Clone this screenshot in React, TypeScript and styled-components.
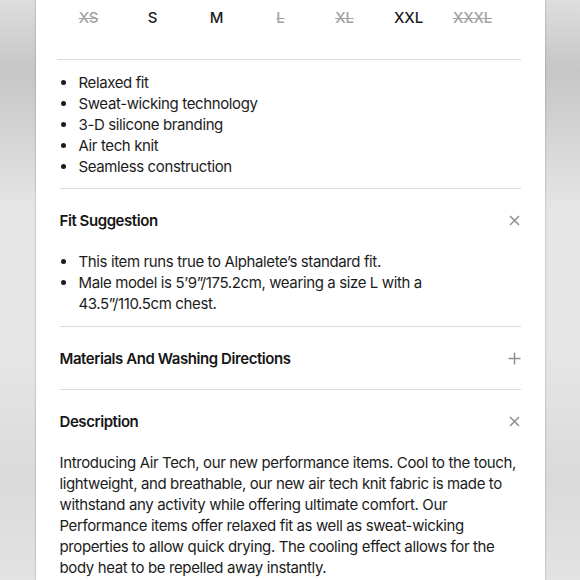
import React from "react";
import styled, { createGlobalStyle } from "styled-components";

const Global = createGlobalStyle`
  html, body { margin: 0; padding: 0; }
  body {
    width: 580px;
    height: 580px;
    overflow: hidden;
    font-family: Inter, "Noto Sans", sans-serif;
    background: linear-gradient(180deg, #dedede 0px, #c6c6c6 70px, #d3d3d3 130px, #e6e6e6 210px, #e6e6e6 350px, #dadada 480px, #e3e3e3 580px);
    -webkit-font-smoothing: antialiased;
  }
`;

const Panel = styled.main`
  width: 509px;
  margin: 0 auto;
  min-height: 640px;
  background: #fff;
  box-shadow: 0 0 0 1px rgba(0, 0, 0, 0.06), 0 0 3px rgba(0, 0, 0, 0.12);
  padding: 0 24px;
  box-sizing: border-box;
  color: #1c1c1c;
  letter-spacing: -0.38px;
`;

const SizeRow = styled.div`
  display: grid;
  grid-template-columns: repeat(7, 64px);
  margin-left: -3px;
  padding: 7px 0 31px;
  border-bottom: 1px solid #dcdcdc;
`;

const Size = styled.span<{ $out?: boolean }>`
  text-align: center;
  font-size: 15px;
  line-height: 21px;
  font-weight: 500;
  letter-spacing: -0.2px;
  color: ${(p) => (p.$out ? "#a3a3a3" : "#1c1c1c")};
  text-decoration: ${(p) => (p.$out ? "line-through" : "none")};
  text-decoration-thickness: 1px;
`;

const List = styled.ul<{ $top?: number; $bottom?: number }>`
  list-style: none;
  margin: 0;
  padding: ${(p) => p.$top ?? 0}px 0 ${(p) => p.$bottom ?? 12}px;
`;

const Item = styled.li`
  display: grid;
  grid-template-columns: 19px 1fr;
  font-size: 15px;
  line-height: 21px;
  &::before {
    content: "";
    width: 5px;
    height: 5px;
    border-radius: 50%;
    background: #1c1c1c;
    margin: 8px 0 0 1px;
  }
`;

const Section = styled.section`
  border-top: 1px solid #dcdcdc;
`;

const Header = styled.div`
  display: flex;
  align-items: center;
  justify-content: space-between;
  padding: 21px 0 20px;
`;

const Title = styled.h3`
  margin: 0;
  font-size: 15px;
  line-height: 21px;
  font-weight: 600;
  letter-spacing: -0.43px;
  color: #161616;
`;

const IconBox = styled.span`
  display: flex;
  width: 14px;
  height: 14px;
  align-items: center;
  justify-content: center;
  margin-right: -1px;
`;

const Paragraph = styled.p`
  margin: 0;
  padding: 0 0 12px;
  font-size: 15px;
  line-height: 21px;
`;

const Close = () => (
  <IconBox>
    <svg width="11" height="11" viewBox="0 0 11 11">
      <path d="M1 1L10 10M10 1L1 10" stroke="#8f8f8f" strokeWidth="1.5" />
    </svg>
  </IconBox>
);

const Plus = () => (
  <IconBox>
    <svg width="13" height="13" viewBox="0 0 13 13">
      <path d="M6.5 0.5V12.5M0.5 6.5H12.5" stroke="#8f8f8f" strokeWidth="1.5" />
    </svg>
  </IconBox>
);

const sizes: [string, boolean][] = [
  ["XS", true],
  ["S", false],
  ["M", false],
  ["L", true],
  ["XL", true],
  ["XXL", false],
  ["XXXL", true],
];

const features = [
  "Relaxed fit",
  "Sweat-wicking technology",
  "3-D silicone branding",
  "Air tech knit",
  "Seamless construction",
];

export default function App() {
  return (
    <>
      <Global />
      <Panel>
        <SizeRow>
          {sizes.map(([s, out]) => (
            <Size key={s} $out={out}>
              {s}
            </Size>
          ))}
        </SizeRow>
        <List $top={12} $bottom={11}>
          {features.map((f) => (
            <Item key={f}>{f}</Item>
          ))}
        </List>
        <Section>
          <Header>
            <Title>Fit Suggestion</Title>
            <Close />
          </Header>
          <List>
            <Item>This item runs true to Alphalete’s standard fit.</Item>
            <Item>
              <span>
                Male model is 5’9”/175.2cm, wearing a size L with a
                <br />
                43.5”/110.5cm chest.
              </span>
            </Item>
          </List>
        </Section>
        <Section>
          <Header>
            <Title>Materials And Washing Directions</Title>
            <Plus />
          </Header>
        </Section>
        <Section>
          <Header>
            <Title>Description</Title>
            <Close />
          </Header>
          <Paragraph>
            Introducing Air Tech, our new performance items. Cool to the touch, lightweight, and
            breathable, our new air tech knit fabric is made to withstand any activity while
            offering ultimate comfort. Our Performance items offer relaxed fit as well as
            sweat-wicking properties to allow quick drying. The cooling effect allows for the body
            heat to be repelled away instantly.
          </Paragraph>
        </Section>
      </Panel>
    </>
  );
}
